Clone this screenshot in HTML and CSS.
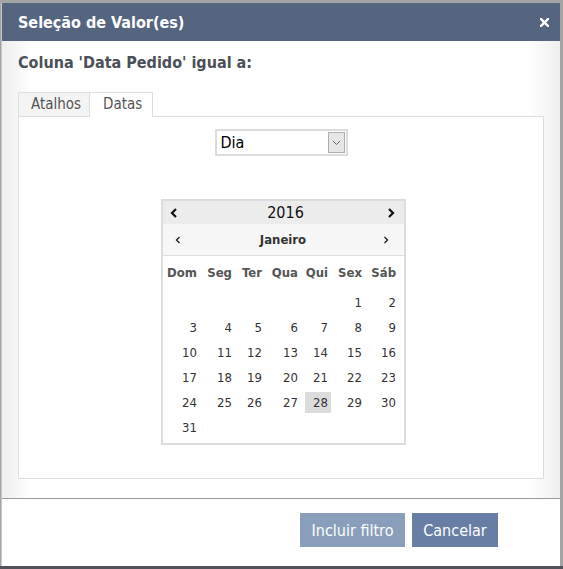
FILE: index.html
```html
<!DOCTYPE html>
<html lang="pt">
<head>
<meta charset="utf-8">
<title>Seleção de Valor(es)</title>
<link rel="stylesheet" href="styles.css">
</head>
<body>
<div class="dialog">
  <div class="titlebar">
    <span class="title">Seleção de Valor(es)</span>
    <span class="close" aria-label="Fechar">
      <svg width="9" height="9" viewBox="0 0 9 9"><path d="M1 1 L8 8 M8 1 L1 8" stroke="#fff" stroke-width="2.4" stroke-linecap="square"/></svg>
    </span>
  </div>
  <div class="content">
    <h2 class="heading">Coluna 'Data Pedido' igual a:</h2>
    <div class="tabs">
      <div class="tab">Atalhos</div>
      <div class="tab active">Datas</div>
    </div>
    <div class="panel">
      <div class="select">
        <span class="select-value">Dia</span>
        <span class="select-btn">
          <svg width="9" height="6" viewBox="0 0 9 6"><path d="M1 1 L4.5 4.5 L8 1" fill="none" stroke="#666" stroke-width="1"/></svg>
        </span>
      </div>
      <div class="calendar">
        <div class="cal-year">
          <span class="arrow big"><svg width="8" height="10" viewBox="0 0 8 10"><path d="M6 1 L2 5 L6 9" fill="none" stroke="#111" stroke-width="2.2"/></svg></span>
          <span class="year">2016</span>
          <span class="arrow big"><svg width="8" height="10" viewBox="0 0 8 10"><path d="M2 1 L6 5 L2 9" fill="none" stroke="#111" stroke-width="2.2"/></svg></span>
        </div>
        <div class="cal-month">
          <span class="arrow small"><svg width="6" height="8" viewBox="0 0 6 8"><path d="M4.5 1 L1.5 4 L4.5 7" fill="none" stroke="#222" stroke-width="1.4"/></svg></span>
          <span class="month">Janeiro</span>
          <span class="arrow small"><svg width="6" height="8" viewBox="0 0 6 8"><path d="M1.5 1 L4.5 4 L1.5 7" fill="none" stroke="#222" stroke-width="1.4"/></svg></span>
        </div>
        <div class="cal-grid">
          <div class="dh">Dom</div><div class="dh">Seg</div><div class="dh">Ter</div><div class="dh">Qua</div><div class="dh">Qui</div><div class="dh">Sex</div><div class="dh">Sáb</div>

          <div class="d"></div><div class="d"></div><div class="d"></div><div class="d"></div><div class="d"></div><div class="d"><span>1</span></div><div class="d"><span>2</span></div>
          <div class="d"><span>3</span></div><div class="d"><span>4</span></div><div class="d"><span>5</span></div><div class="d"><span>6</span></div><div class="d"><span>7</span></div><div class="d"><span>8</span></div><div class="d"><span>9</span></div>
          <div class="d"><span>10</span></div><div class="d"><span>11</span></div><div class="d"><span>12</span></div><div class="d"><span>13</span></div><div class="d"><span>14</span></div><div class="d"><span>15</span></div><div class="d"><span>16</span></div>
          <div class="d"><span>17</span></div><div class="d"><span>18</span></div><div class="d"><span>19</span></div><div class="d"><span>20</span></div><div class="d"><span>21</span></div><div class="d"><span>22</span></div><div class="d"><span>23</span></div>
          <div class="d"><span>24</span></div><div class="d"><span>25</span></div><div class="d"><span>26</span></div><div class="d"><span>27</span></div><div class="d"><span class="today">28</span></div><div class="d"><span>29</span></div><div class="d"><span>30</span></div>
          <div class="d"><span>31</span></div><div class="d"></div><div class="d"></div><div class="d"></div><div class="d"></div><div class="d"></div><div class="d"></div>
        </div>
      </div>
    </div>
  </div>
  <div class="footer">
    <button class="btn btn-disabled">Incluir filtro</button>
    <button class="btn btn-primary">Cancelar</button>
  </div>
</div>
</body>
</html>
```
FILE: styles.css
```css
html, body {
  margin: 0;
  padding: 0;
}
body {
  width: 563px;
  height: 569px;
  overflow: hidden;
  background: linear-gradient(to bottom, #a4a4a4 0, #a4a4a4 566px, #50545a 566px);
  font-family: "DejaVu Sans Condensed", "Liberation Sans", sans-serif;
}
.dialog {
  margin: 3px 3px 0 1px;
  height: 563px;
  border-left: 1px solid #c8c8c8;
  background: #fff;
  display: flex;
  flex-direction: column;
  box-sizing: border-box;
}
.titlebar {
  height: 38px;
  background: #56657f;
  display: flex;
  align-items: center;
  justify-content: space-between;
  padding: 0 11px 0 16px;
  flex: none;
}
.title {
  color: #fff;
  font-weight: bold;
  font-size: 16px;
}
.close {
  display: flex;
  width: 9px;
  height: 9px;
}
.content {
  flex: none;
  height: 458px;
  box-sizing: border-box;
  padding: 12px 16px 0 16px;
  background: linear-gradient(to right, #eeeeee 0, #ffffff 30px, #ffffff 527px, #eeeeee 558px);
  border-bottom: 1px solid #9a9a9a;
}
.heading {
  margin: 0;
  font-size: 16px;
  line-height: 20px;
  font-weight: bold;
  color: #4b5058;
}
.tabs {
  display: flex;
  margin-top: 19px;
  height: 24px;
  position: relative;
  z-index: 1;
}
.tab {
  box-sizing: border-box;
  height: 24px;
  font-size: 15px;
  line-height: 23px;
  color: #555;
  padding: 0 12px;
  border: 1px solid #dedede;
  border-bottom: none;
  background: #f4f4f4;
}
.tab:first-child {
  width: 72px;
}
.tab.active {
  width: 63px;
  background: #fff;
  height: 25px;
  padding: 0 10px 0 13px;
  border-left: none;
}
.panel {
  box-sizing: border-box;
  width: 526px;
  height: 363px;
  border: 1px solid #dedede;
  background: #fff;
  display: flex;
  flex-direction: column;
  align-items: center;
  padding-top: 12px;
}
.select {
  box-sizing: border-box;
  width: 133px;
  height: 27px;
  border: 2px solid #dcdcdc;
  display: flex;
  align-items: center;
  justify-content: space-between;
  padding: 0 1px 0 4px;
  background: #fff;
}
.select-value {
  font-size: 16px;
  color: #000;
}
.select-btn {
  box-sizing: border-box;
  width: 17px;
  height: 21px;
  border: 1px solid #adadad;
  background: #e6e6e6;
  display: flex;
  align-items: center;
  justify-content: center;
}
.calendar {
  box-sizing: border-box;
  width: 245px;
  height: 246px;
  margin-top: 43px;
  margin-left: 5px;
  border: 2px solid #dcdcdc;
  background: #fff;
}
.cal-year {
  height: 23px;
  background: #ececec;
  display: flex;
  align-items: center;
  justify-content: space-between;
  padding: 0 9px 0 7px;
}
.year {
  font-size: 16px;
  color: #111;
  margin-left: 6px;
}
.arrow {
  display: flex;
}
.cal-month {
  height: 31px;
  background: #f7f7f7;
  border-bottom: 1px solid #dedede;
  display: flex;
  align-items: center;
  justify-content: space-between;
  padding: 0 15px 0 12px;
}
.month {
  font-size: 13px;
  font-weight: bold;
  color: #333;
  margin-left: 2px;
}
.cal-grid {
  display: grid;
  grid-template-columns: 37px 35px 30px 36px 30px 34px 34px;
  grid-template-rows: 34px repeat(6, 25px);
}
.dh {
  font-size: 13px;
  font-weight: bold;
  color: #555;
  text-align: right;
  padding-right: 3px;
  line-height: 34px;
}
.d {
  display: flex;
  justify-content: flex-end;
  align-items: center;
}
.d span {
  box-sizing: border-box;
  width: 26px;
  height: 21px;
  line-height: 21px;
  text-align: right;
  padding-right: 3px;
  font-size: 13px;
  color: #333;
}
.d span.today {
  background: #dcdcdc;
}
.footer {
  flex: 1;
  display: flex;
  justify-content: flex-end;
  align-items: flex-start;
  gap: 7px;
  padding: 14px 62px 0 0;
  background: #fff;
}
.btn {
  border: none;
  height: 34px;
  font-family: "DejaVu Sans Condensed", "Liberation Sans", sans-serif;
  font-size: 16px;
  color: #fff;
  padding: 0;
}
.btn-disabled {
  width: 105px;
  background: #889eba;
}
.btn-primary {
  width: 86px;
  background: #687ea4;
}
```
